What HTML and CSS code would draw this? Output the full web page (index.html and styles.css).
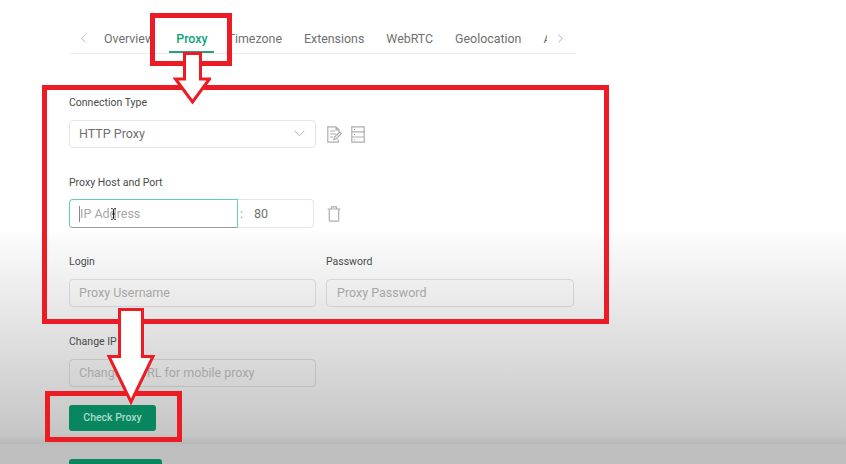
FILE: index.html
```html
<!DOCTYPE html>
<html lang="en">
<head>
<meta charset="utf-8">
<title>Proxy settings</title>
<link rel="stylesheet" href="styles.css">
</head>
<body>
<div class="page">
  <div class="panel">
    <nav class="tabs">
      <svg class="chev" width="7" height="9" viewBox="0 0 7 9"><path d="M5.500 .8 1.600 4.500l3.900 3.700"/></svg>
      <div class="tab-list">
        <span class="tab">Overview</span>
        <span class="tab tab-proxy">Proxy</span>
        <span class="tab">Timezone</span>
        <span class="tab">Extensions</span>
        <span class="tab">WebRTC</span>
        <span class="tab">Geolocation</span>
        <span class="tab">Advanced</span>
      </div>
      <svg class="chev" width="7" height="9" viewBox="0 0 7 9"><path d="M1.500 .8 5.400 4.500 1.500 8.200"/></svg>
    </nav>

    <label class="lbl lbl-type">Connection Type</label>
    <div class="row">
      <div class="field field-wide select">
        <span class="val">HTTP Proxy</span>
        <svg width="11" height="7" viewBox="0 0 11 7"><path d="M.7.8 5.500 5.800 10.300.8"/></svg>
      </div>
      <div class="icons">
        <svg width="15" height="17" viewBox="0 0 15 17"><path d="M9 .8H.8v15.400h10.400v-3M9 .8l3 3V6M9 .8v3h3M3 5h5M3 8h6M3 11h3M7 13.500l.6-2.500 5-5 1.700 1.700-5 5z"/></svg>
        <svg width="14" height="17" viewBox="0 0 14 17"><path d="M.8.8h12.400v15.400H.8zM.8 5.900h12.400M.8 11h12.400M3 3.300h1M3 8.400h1M3 13.500h1"/></svg>
      </div>
    </div>

    <label class="lbl lbl-host">Proxy Host and Port</label>
    <div class="row row-host">
      <div class="hostport">
        <div class="host"><i class="caret"></i><span class="ph">IP Address</span></div>
        <div class="port"><span class="colon">:</span><span class="val">80</span></div>
      </div>
      <svg class="trash" width="14" height="16" viewBox="0 0 14 16"><path d="M.5 3h13M4.500 3V.8h5V3M2.300 3v11.200q0 1 1 1h7.400q1 0 1-1V3"/></svg>
    </div>

    <div class="pair">
      <div class="col">
        <label class="lbl">Login</label>
        <div class="field"><span class="ph">Proxy Username</span></div>
      </div>
      <div class="col">
        <label class="lbl">Password</label>
        <div class="field"><span class="ph">Proxy Password</span></div>
      </div>
    </div>

    <label class="lbl lbl-change">Change IP URL</label>
    <div class="field field-wide"><span class="ph">Change IP URL for mobile proxy</span></div>
    <button class="btn">Check Proxy</button>
  </div>

  <div class="footer"><div class="btn-save"></div></div>

  <div class="mark mark-tab"></div>
  <div class="mark mark-form"></div>
  <div class="mark mark-btn"></div>
  <svg class="arrow arrow-a" width="38" height="54" viewBox="0 0 38 54"><path d="M11.500 1.500h16v25.500h9L19.500 50 2.500 27h9z"/></svg>
  <svg class="arrow arrow-b" width="52" height="100" viewBox="0 0 52 100"><path d="M13.500 2.500h23v47h10.500L25 95 3 49.500h10.500z"/></svg>
  <svg class="cursor" width="7" height="12" viewBox="0 0 7 12"><path d="M1 .7h1.500L3.500 1.500l1-.8H6M3.500 1.500v9M1 11.300h1.500l1-.8 1 .8H6M2 6h3"/></svg>
</div>
</body>
</html>
```

FILE: styles.css
```css
* { box-sizing: border-box; }
html, body { margin: 0; padding: 0; }
body { font-family: Roboto, "Liberation Sans", sans-serif; background: #fff; }
.page { position: relative; width: 846px; height: 464px; overflow: hidden; background: linear-gradient(#fff 230px, #fafafa 240px, #c6c6c6 434px, #b8b8b8 444px); }
.panel { width: 520px; margin-left: 69px; padding-top: 24px; }

.tabs { display: flex; align-items: center; width: 507px; height: 30px; border-bottom: 1px solid #ececec; }
.chev { flex: none; }
.chev path { fill: none; stroke: #b5b5b5; stroke-width: 1; }
.chev:first-child { margin-left: 11px; }
.tab-list { display: flex; align-self: stretch; width: 443px; margin: 0 10px 0 17px; overflow: hidden; font-size: 12.400px; color: #707070; gap: 22px; white-space: nowrap; }
.tab { position: relative; flex: none; line-height: 29px; }
.tab-proxy { color: #10a37a; font-weight: 500; margin-right: -2px; }
.tab-proxy::after { content: ""; position: absolute; left: -7px; bottom: 0; width: 45px; height: 2px; background: #2f9c82; }

.lbl { display: block; font-size: 10.500px; line-height: 14px; color: #4a4a4a; }
.lbl-type { margin-top: 42px; }
.lbl-host { margin-top: 28px; }
.lbl-change { margin-top: 28px; }

.row { display: flex; align-items: center; margin-top: 10px; }
.row-host { margin-top: 9px; }
.field { display: flex; align-items: center; justify-content: space-between; height: 28px; padding: 0 9px 1px; border: 1px solid rgba(0,0,0,.1); border-radius: 4px; font-size: 12.500px; }
.field-wide { width: 247px; }
.col:last-child .field { padding-left: 10px; }
.select svg path { fill: none; stroke: #b9b9b9; stroke-width: 1; }
.select svg { margin-right: 1px; }
.val { color: #707070; }
.ph { color: #a6a6a6; }
.icons { display: flex; align-items: center; gap: 8px; margin-left: 11px; }
.icons svg:last-child { margin-left: 1px; }
.icons path, .trash path { fill: none; stroke: #adadad; stroke-width: 1.200; }

.hostport { display: flex; width: 245px; height: 29px; }
.host { position: relative; display: flex; align-items: center; width: 169px; padding-left: 10px; border: 1px solid #62cdb9; border-bottom-color: #9a9e9d; border-radius: 4px 0 0 4px; font-size: 12.500px; }
.caret { position: absolute; left: 9px; top: 6px; width: 1px; height: 16px; background: #888; }
.port { flex: 1; display: flex; align-items: center; border: 1px solid rgba(0,0,0,.1); border-left: 0; border-radius: 0 4px 4px 0; font-size: 12.500px; padding-left: 2px; }
.colon { color: #9a9a9a; margin-right: 11px; }
.trash { margin-left: 13px; }

.pair { display: grid; grid-template-columns: 247px 248px; column-gap: 10px; margin-top: 27px; }
.pair .field { margin-top: 10px; }
.lbl-change + .field { margin-top: 10px; }

.btn { display: block; width: 87px; height: 26px; margin-top: 18px; padding: 0 0 1px; border: 0; border-radius: 3px; background: #078660; color: #a9dcc9; font: 500 10.500px Roboto, "Liberation Sans", sans-serif; }

.footer { position: absolute; left: 0; right: 0; top: 444px; height: 20px; background: #bebebe; }
.btn-save { width: 93px; height: 10px; margin: 15px 0 0 69px; background: #078660; border-radius: 3px 3px 0 0; }

.mark { position: absolute; border: 5px solid #ed1c24; }
.mark-tab { left: 150px; top: 13px; width: 82px; height: 53px; }
.mark-form { left: 42px; top: 85px; width: 567px; height: 239px; }
.mark-btn { left: 45px; top: 391px; width: 137px; height: 51px; }
.arrow { position: absolute; }
.arrow path { fill: #fff; stroke: #ed1c24; stroke-width: 3; }
.arrow-a { left: 173px; top: 52px; }
.arrow-b { left: 106px; top: 307px; }
.cursor { position: absolute; left: 110px; top: 208px; }
.cursor path { fill: none; stroke: #222; stroke-width: 1; }
```
